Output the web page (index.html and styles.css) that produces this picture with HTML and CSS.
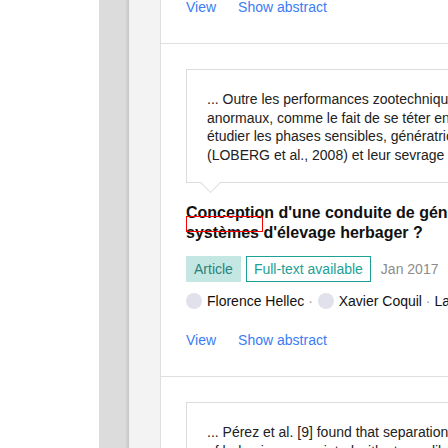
FILE: index.html
```html
<!DOCTYPE html>
<html lang="fr">
<head>
<meta charset="utf-8">
<title>Citations</title>
<link rel="stylesheet" href="styles.css">
</head>
<body>
<div class="page">
  <div class="blank"></div>
  <div class="rail"></div>
  <div class="panel"></div>
  <main class="card">
    <div class="list">
      <section class="item item-partial">
        <div class="actions"><a class="link">View</a><a class="link">Show abstract</a></div>
      </section>
      <section class="item">
        <blockquote class="quote">... Outre les performances zootechniques, des comportements<br>anormaux, comme le fait de se téter entre eux, sont observés<br>étudier les phases sensibles, génératrices de stress chez le veau<br>(LOBERG et al., 2008) et leur sevrage ...</blockquote>
        <h2 class="title">Conception d'une conduite de génisses laitières économe pour des<br>systèmes d'élevage herbager ?<span class="mark"></span></h2>
        <div class="meta">
          <span class="badge badge-type">Article</span>
          <span class="badge badge-full">Full-text available</span>
          <span class="date">Jan 2017</span>
        </div>
        <div class="authors">
          <span class="author"><span class="avatar"></span>Florence Hellec</span><span class="sep"> · </span><span class="author"><span class="avatar"></span>Xavier Coquil</span><span class="sep"> · </span><span class="author">Laurence Fortun</span>
        </div>
        <div class="actions"><a class="link">View</a><a class="link">Show abstract</a></div>
      </section>
      <section class="item">
        <blockquote class="quote">... Pérez et al. [9] found that separation of calves from their dams<br>of behaviors associated with stress, like vocalizations and ...</blockquote>
      </section>
    </div>
  </main>
</div>
</body>
</html>
```
FILE: styles.css
```css
html, body {
  margin: 0;
  padding: 0;
  overflow: hidden;
  background: #ffffff;
}
body {
  font-family: "Liberation Sans", Arial, sans-serif;
  color: #222;
}
.page {
  display: flex;
  height: 448px;
  width: 900px;
}
.blank {
  width: 99px;
  flex: none;
  background: #ffffff;
}
.rail {
  width: 30px;
  flex: none;
  background: linear-gradient(90deg, #dcdcdc 0, #dcdcdc 26px, #d0d0d0 28px, #c6c6c6 30px);
}
.panel {
  width: 31px;
  flex: none;
  background: #f3f3f3;
}
.card {
  width: 700px;
  flex: none;
  background: #ffffff;
  border-left: 1px solid #dedede;
  white-space: nowrap;
}
.list {
  margin-top: -3px;
}
.item {
  padding: 25px 0 26px 25px;
  border-top: 1px solid #e0e0e0;
}
.item-partial {
  padding-top: 0;
  border-top: none;
}
.actions {
  display: flex;
  gap: 22px;
  font-size: 14px;
  line-height: 20px;
}
.link {
  color: #3b7cf4;
  cursor: pointer;
}
.quote {
  position: relative;
  margin: 0;
  width: 600px;
  padding: 20px 20px 18px 20px;
  border: 1px solid #dcdcdc;
  font-size: 14px;
  line-height: 18.5px;
  color: #222;
}
.quote::after {
  content: "";
  position: absolute;
  left: 16px;
  bottom: -8px;
  width: 14px;
  height: 14px;
  background: #ffffff;
  border-right: 1px solid #dcdcdc;
  border-bottom: 1px solid #dcdcdc;
  transform: rotate(45deg);
}
.title {
  position: relative;
  margin: 20px 0 0 0;
  font-size: 16px;
  line-height: 20px;
  font-weight: bold;
  color: #111;
}
.mark {
  position: absolute;
  left: 0;
  top: 13px;
  width: 75px;
  height: 14px;
  border: 1px solid #ff0000;
}
.meta {
  display: flex;
  align-items: center;
  margin-top: 13px;
  font-size: 14px;
}
.badge {
  display: inline-block;
  height: 26px;
  box-sizing: border-box;
}
.badge-type {
  padding: 0 8px;
  line-height: 26px;
  background: #c4e7e3;
  color: #2a8279;
}
.badge-full {
  margin-left: 5px;
  padding: 0 7px;
  line-height: 24px;
  border: 1px solid #1ba196;
  color: #23a095;
}
.date {
  margin-left: 10px;
  color: #8c8c8c;
}
.authors {
  display: flex;
  align-items: center;
  margin-top: 9px;
  font-size: 14px;
  line-height: 20px;
  color: #111;
}
.author {
  display: inline-flex;
  align-items: center;
}
.avatar {
  width: 16px;
  height: 16px;
  border-radius: 50%;
  background: #e1e1ec;
  margin-right: 5px;
  margin-left: 1px;
}
.author:first-child .avatar {
  margin-left: 0;
}
.sep {
  color: #999;
  white-space: pre;
}
.item .actions {
  margin-top: 19px;
}
.item-partial .actions {
  margin-top: 0;
}
```
